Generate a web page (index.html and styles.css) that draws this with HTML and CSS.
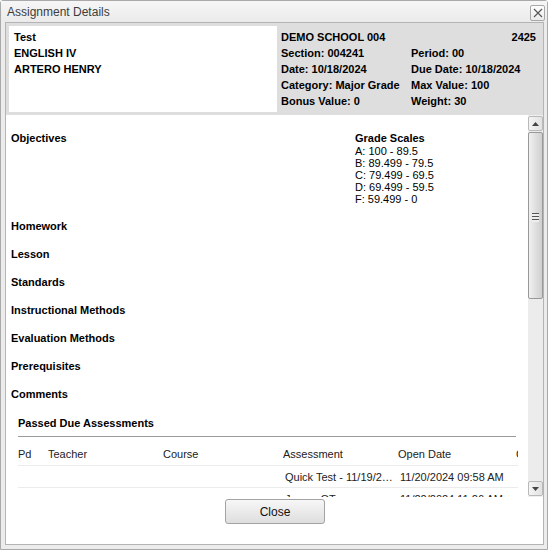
FILE: index.html
```html
<!DOCTYPE html>
<html>
<head>
<meta charset="utf-8">
<link rel="stylesheet" href="styles.css">
</head>
<body>
<div class="window">
  <div class="titlebar">
    <span class="title">Assignment Details</span>
    <span class="xbtn"><svg width="10" height="10" viewBox="0 0 10 10"><path d="M1 1L9 9M9 1L1 9" stroke="#555" stroke-width="1.1" fill="none"/></svg></span>
  </div>
  <div class="panel">
    <div class="header">
      <div class="hbox">
        <div>Test</div>
        <div>ENGLISH IV</div>
        <div>ARTERO HENRY</div>
      </div>
      <div class="hinfo">
        <div class="hrow"><span class="school">DEMO SCHOOL 004</span><span class="num">2425</span></div>
        <div class="hrow"><span class="c1">Section: 004241</span><span>Period: 00</span></div>
        <div class="hrow"><span class="c1">Date: 10/18/2024</span><span>Due Date: 10/18/2024</span></div>
        <div class="hrow"><span class="c1">Category: Major Grade</span><span>Max Value: 100</span></div>
        <div class="hrow"><span class="c1">Bonus Value: 0</span><span>Weight: 30</span></div>
      </div>
    </div>
    <div class="scrollarea">
      <div class="content">
        <div class="sec sec-obj">
          <div class="label">Objectives</div>
          <div class="scales">
            <div class="label">Grade Scales</div>
            <div class="scale">A: 100 - 89.5</div>
            <div class="scale">B: 89.499 - 79.5</div>
            <div class="scale">C: 79.499 - 69.5</div>
            <div class="scale">D: 69.499 - 59.5</div>
            <div class="scale">F: 59.499 - 0</div>
          </div>
        </div>
        <div class="sec"><div class="label">Homework</div></div>
        <div class="sec"><div class="label">Lesson</div></div>
        <div class="sec"><div class="label">Standards</div></div>
        <div class="sec"><div class="label">Instructional Methods</div></div>
        <div class="sec"><div class="label">Evaluation Methods</div></div>
        <div class="sec"><div class="label">Prerequisites</div></div>
        <div class="sec"><div class="label">Comments</div></div>
        <div class="passed">
          <div class="ptitle">Passed Due Assessments</div>
          <div class="table">
            <div class="trow thead">
              <span class="cpd">Pd</span><span class="cteach">Teacher</span><span class="ccourse">Course</span><span class="cassess">Assessment</span><span class="copen">Open Date</span><span class="cclose">Close Date</span>
            </div>
            <div class="trow tdata">
              <span class="cpd"></span><span class="cteach"></span><span class="ccourse"></span><span class="cassess">Quick Test - 11/19/2024</span><span class="copen">11/20/2024 09:58 AM</span><span class="cclose">11/21/2024</span>
            </div>
            <div class="trow tdata">
              <span class="cpd"></span><span class="cteach"></span><span class="ccourse"></span><span class="cassess">James OT</span><span class="copen">11/22/2024 11:26 AM</span><span class="cclose">11/23/2024</span>
            </div>
          </div>
        </div>
      </div>
      <div class="scrollbar">
        <div class="sbtn"><svg width="7" height="4" viewBox="0 0 7 4"><path d="M0 4L3.5 0L7 4Z" fill="#444"/></svg></div>
        <div class="track">
          <div class="thumb"><span class="grip"></span></div>
        </div>
        <div class="sbtn"><svg width="7" height="4" viewBox="0 0 7 4"><path d="M0 0L3.5 4L7 0Z" fill="#444"/></svg></div>
      </div>
    </div>
    <div class="footer">
      <button class="closebtn">Close</button>
    </div>
  </div>
</div>
</body>
</html>
```
FILE: styles.css
```css
html, body {
  margin: 0;
  padding: 0;
  background: #ffffff;
}
body {
  font-family: "Liberation Sans", Arial, sans-serif;
  color: #000;
}
.window {
  box-sizing: border-box;
  width: 548px;
  height: 550px;
  border: 1px solid #a9a9a9;
  border-radius: 3px 3px 0 0;
  background: #ececec;
  padding: 0 3px 4px 4px;
  display: flex;
  flex-direction: column;
}
.titlebar {
  height: 21px;
  display: flex;
  align-items: center;
  background: linear-gradient(#f6f6f6, #ebebeb);
  margin: 0 -3px 0 -4px;
  padding: 0 2px 0 6px;
}
.title {
  font-size: 12px;
  color: #3c3c3c;
  margin-top: 1px;
}
.xbtn {
  margin-left: auto;
  width: 13px;
  height: 14px;
  border: 1px solid #a8a8a8;
  border-radius: 2px;
  background: linear-gradient(#fdfdfd, #ececec);
  display: flex;
  align-items: center;
  justify-content: center;
  margin-top: 2px;
}
.panel {
  flex: 1;
  border: 1px solid #b4b4b4;
  background: #fff;
  display: flex;
  flex-direction: column;
  min-height: 0;
}
.header {
  height: 92px;
  box-sizing: border-box;
  background: #dedede;
  display: flex;
  padding: 3px 7px 3px 3px;
  font-size: 11px;
  font-weight: bold;
  line-height: 16px;
}
.hbox {
  width: 268px;
  background: #fff;
  box-sizing: border-box;
  padding: 3px 5px;
}
.hinfo {
  flex: 1;
  padding: 3px 0 0 4px;
}
.hrow {
  display: flex;
}
.school {
  flex: 1;
}
.c1 {
  width: 130px;
}
.scrollarea {
  height: 382px;
  display: flex;
  min-height: 0;
}
.content {
  flex: 1;
  overflow: hidden;
  padding: 9px 0 0 5px;
  font-size: 11px;
  line-height: 14px;
}
.label {
  font-weight: bold;
}
.sec {
  padding: 7px 0;
}
.sec-obj {
  display: flex;
}
.sec-obj > .label {
  width: 344px;
}
.scale {
  line-height: 12px;
}
.passed {
  margin: 1px 0 0 7px;
  width: 500px;
}
.ptitle {
  font-weight: bold;
  padding: 7px 0 6px 0;
  border-bottom: 1px solid #9a9a9a;
  margin-right: 2px;
}
.table {
  overflow: hidden;
}
.trow {
  display: flex;
  white-space: nowrap;
  color: #222;
}
.trow > span {
  flex: none;
  overflow: hidden;
  text-overflow: ellipsis;
  box-sizing: border-box;
}
.thead {
  padding: 10px 0 4px 0;
  border-bottom: 1px solid #ececec;
}
.tdata {
  padding: 4px 0 3px 0;
  border-bottom: 1px solid #ececec;
}
.tdata > span {
  padding-left: 2px;
}
.cpd { width: 30px; }
.cteach { width: 115px; }
.ccourse { width: 120px; }
.cassess { width: 115px; padding-right: 2px; }
.copen { width: 118px; }
.cclose { width: 100px; }
.scrollbar {
  width: 15px;
  display: flex;
  flex-direction: column;
  padding: 1px 0 1px 0;
  box-sizing: border-box;
  background: #f0f0f0;
}
.sbtn {
  height: 15px;
  box-sizing: border-box;
  border: 1px solid #b9b9b9;
  border-radius: 2px;
  background: linear-gradient(90deg, #f4f4f4, #e2e2e2);
  display: flex;
  align-items: center;
  justify-content: center;
}
.track {
  flex: 1;
  padding: 1px 0;
  background: #ececec;
}
.thumb {
  height: 167px;
  box-sizing: border-box;
  border: 1px solid #999;
  border-radius: 2px;
  background: linear-gradient(90deg, #f0f0f0, #dcdcdc 60%, #cfcfcf);
  display: flex;
  align-items: center;
  justify-content: center;
}
.grip {
  width: 7px;
  height: 9px;
  margin-top: 3px;
  background: repeating-linear-gradient(#555 0, #555 1px, #eee 1px, #eee 3px);
}
.footer {
  flex: 1;
  display: flex;
  justify-content: center;
  align-items: flex-start;
}
.closebtn {
  margin-top: 2px;
  margin-left: 1px;
  width: 100px;
  height: 25px;
  border: 1px solid #a3a3a3;
  border-radius: 3px;
  background: linear-gradient(#f7f7f7, #dedede);
  font-family: "Liberation Sans", Arial, sans-serif;
  font-size: 12px;
  color: #111;
  padding: 0;
}
```
